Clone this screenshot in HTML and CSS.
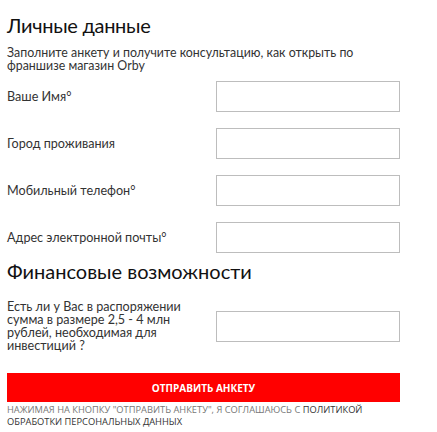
FILE: index.html
```html
<!DOCTYPE html>
<html lang="ru">
<head>
<meta charset="utf-8">
<link rel="stylesheet" href="styles.css">
</head>
<body>
<form class="form">
  <h2 class="title">Личные данные</h2>
  <p class="intro">Заполните анкету и получите консультацию, как открыть по франшизе магазин Orby</p>
  <div class="rows">
    <div class="row"><label class="label">Ваше Имя°</label><input class="field" type="text"></div>
    <div class="row"><label class="label">Город проживания</label><input class="field" type="text"></div>
    <div class="row"><label class="label">Мобильный телефон°</label><input class="field" type="text"></div>
    <div class="row"><label class="label">Адрес электронной почты°</label><input class="field" type="text"></div>
  </div>
  <h2 class="title title-2">Финансовые возможности</h2>
  <div class="row row-tall"><label class="label label-narrow">Есть ли у Вас в распоряжении сумма в размере 2,5 - 4 млн рублей, необходимая для инвестиций ?</label><input class="field" type="text"></div>
  <button class="submit" type="button">ОТПРАВИТЬ АНКЕТУ</button>
  <p class="agree">НАЖИМАЯ НА КНОПКУ "ОТПРАВИТЬ АНКЕТУ", Я СОГЛАШАЮСЬ С <span class="agree-link">ПОЛИТИКОЙ ОБРАБОТКИ ПЕРСОНАЛЬНЫХ ДАННЫХ</span></p>
</form>
</body>
</html>
```
FILE: styles.css
```css
html, body {
  margin: 0;
  padding: 0;
  background: #fff;
}
body {
  font-family: Lato, "Open Sans", sans-serif;
  color: #333;
}
.form {
  width: 393px;
  padding: 12px 0 0 7px;
}
.title {
  margin: 0;
  font-size: 20px;
  line-height: 26px;
  font-weight: 400;
  letter-spacing: -0.3px;
  color: #111;
}
.intro {
  margin: 8px 0 0;
  font-size: 12.4px;
  line-height: 13px;
  color: #333;
}
.rows {
  margin-top: 9px;
  display: flex;
  flex-direction: column;
  gap: 16px;
}
.row {
  display: flex;
  align-items: center;
  justify-content: space-between;
}
.label {
  font-size: 12.6px;
  line-height: 13px;
  color: #333;
}
.label-narrow {
  width: 185px;
}
.field {
  box-sizing: border-box;
  width: 184px;
  height: 31px;
  margin: 0;
  border: 1px solid #bdbdbd;
  background: #fff;
}
.title-2 {
  margin-top: 5px;
  letter-spacing: 0;
}
.row-tall {
  margin-top: 16px;
}
.submit {
  display: block;
  margin-top: 21px;
  width: 393px;
  height: 29px;
  border: 0;
  background: #ff0000;
  color: #fff;
  font-family: "Open Sans", sans-serif;
  font-weight: 700;
  font-size: 10px;
  padding: 0;
}
.agree {
  margin: 2px 0 0;
  font-family: "Open Sans", sans-serif;
  font-size: 9.3px;
  line-height: 11.5px;
  color: #777;
}
.agree-link {
  color: #333;
}
```
